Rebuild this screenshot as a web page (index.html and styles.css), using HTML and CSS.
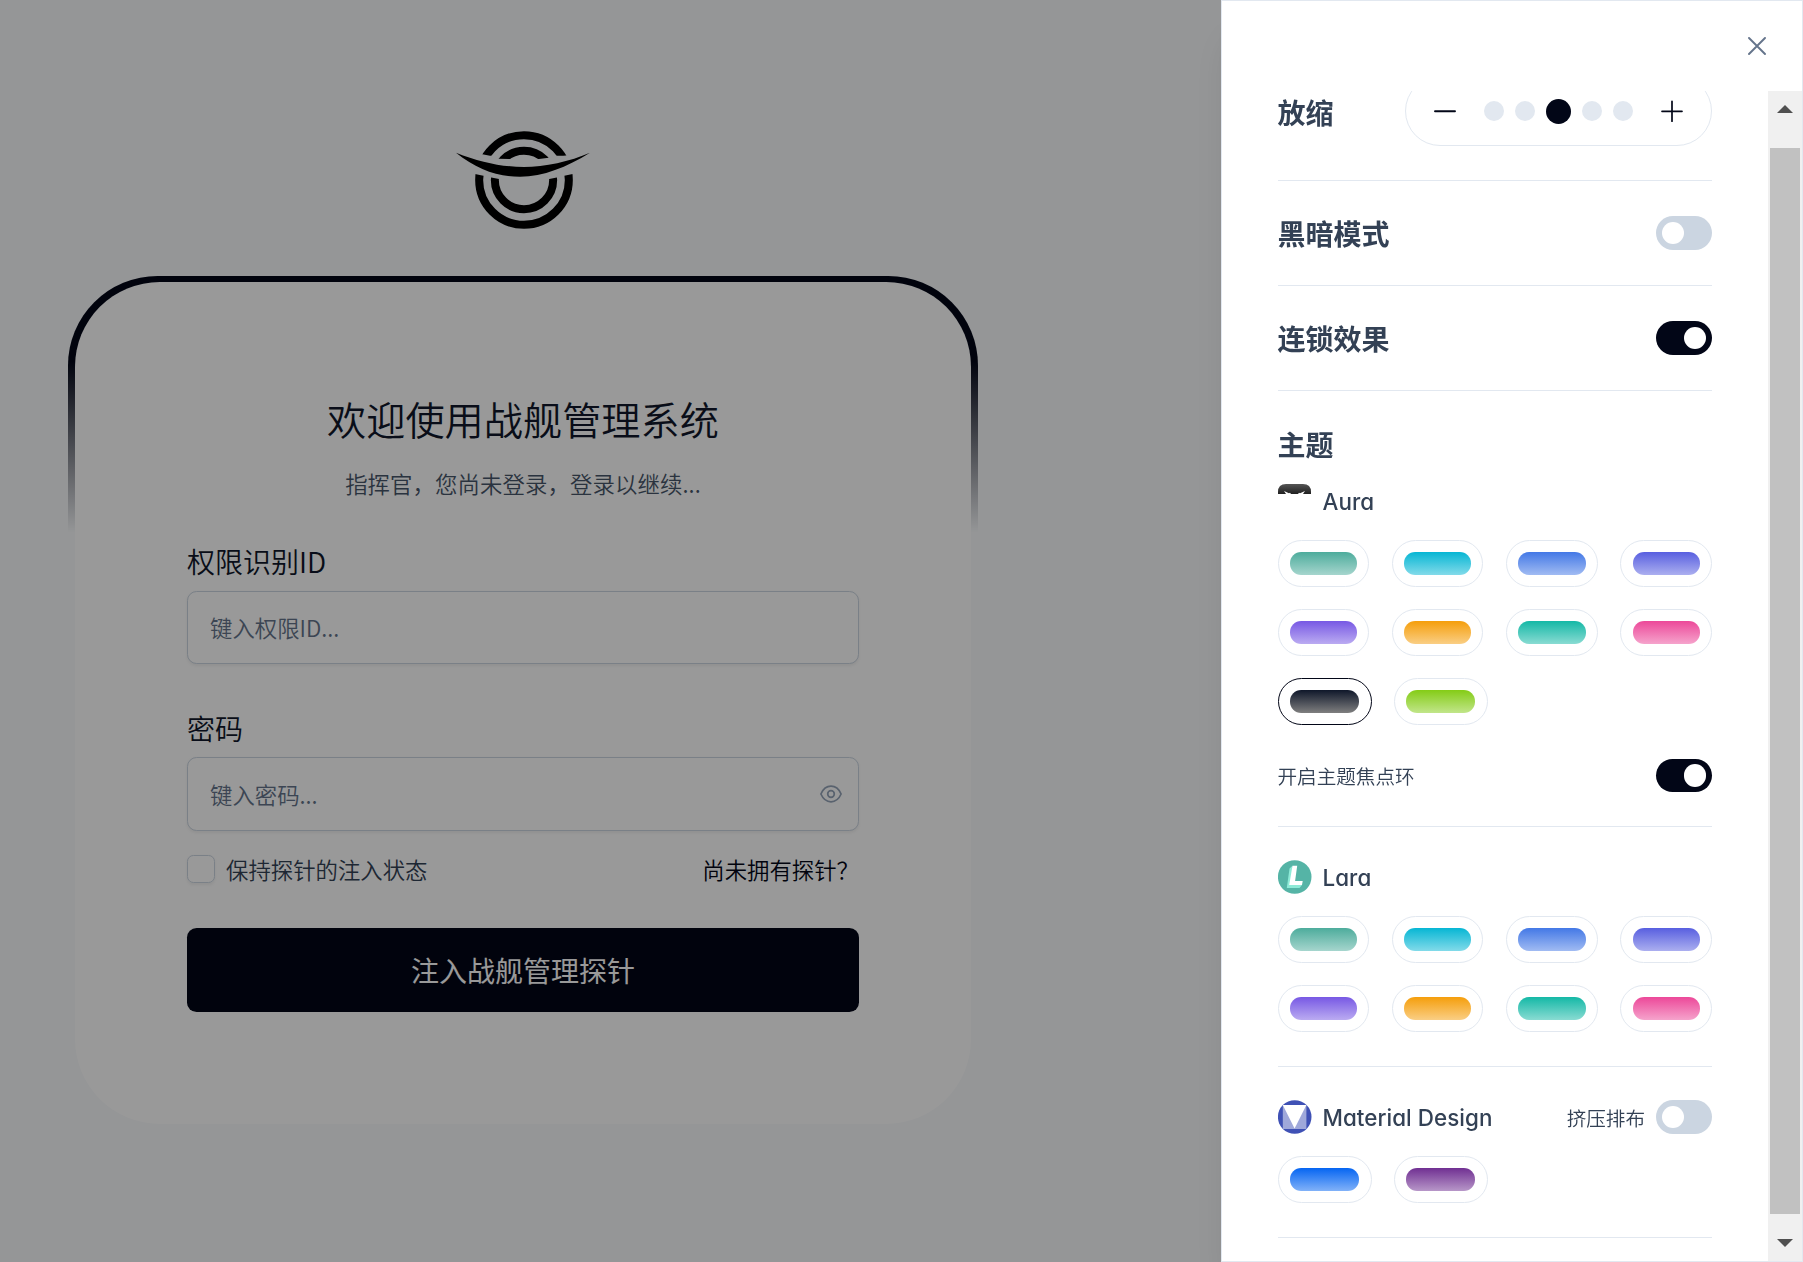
FILE: index.html
```html
<!DOCTYPE html>
<html lang="zh-CN">
<head>
<meta charset="utf-8">
<title>战舰管理系统</title>
<link rel="stylesheet" href="styles.css">
</head>
<body>
<main class="login">
  <svg class="brand" viewBox="45 55 410 310" aria-hidden="true">
    <defs>
      <clipPath id="outer-clip"><path d="M90 50H414V134L370 138L354 138L150 138L127 134H90ZM90 190L105 193L130 198H373L398 193L414 190V370H90Z"/></clipPath>
      <clipPath id="inner-clip"><path d="M150 100H354V144L326 144L297 148H207L178 147H150ZM150 203L177 208H328L354 203V330H150Z"/></clipPath>
    </defs>
    <g fill="none" stroke="#000" stroke-width="24">
      <circle cx="252" cy="211" r="134.5" clip-path="url(#outer-clip)"/>
      <circle cx="252" cy="211" r="87.5" clip-path="url(#inner-clip)"/>
    </g>
    <path d="M48 129C120 158 190 172 252 172S390 155 450 129C380 172 310 201 240 201S110 178 48 129Z"/>
  </svg>
  <div class="card-frame">
    <form class="card">
      <h1 class="title">欢迎使用战舰管理系统</h1>
      <p class="subtitle">指挥官，您尚未登录，登录以继续...</p>
      <label class="label" for="uid">权限识别ID</label>
      <input class="input" id="uid" type="text" placeholder="键入权限ID...">
      <label class="label label-password" for="pwd">密码</label>
      <div class="password">
        <input class="input" id="pwd" type="password" placeholder="键入密码...">
        <svg class="eye" viewBox="0 0 22 18" fill="none" stroke="#94a3b8" stroke-width="1.7"><path d="M.9 9C3 4.2 6.6 1.2 11 1.2S19 4.2 21.1 9C19 13.8 15.4 16.8 11 16.8S3 13.8.9 9Z"/><circle cx="11" cy="9" r="3.3"/></svg>
      </div>
      <div class="options">
        <span class="remember"><span class="checkbox"></span>保持探针的注入状态</span>
        <a class="signup">尚未拥有探针？</a>
      </div>
      <button class="submit" type="button">注入战舰管理探针</button>
    </form>
  </div>
</main>
<div class="mask"></div>
<aside class="panel">
  <header class="panel-header">
    <svg class="close" viewBox="0 0 18 18" fill="none" stroke="#64748b" stroke-width="1.9" stroke-linecap="round"><path d="M1 1L17 17M17 1L1 17"/></svg>
  </header>
  <div class="panel-body">
    <div class="panel-scroll">
      <div class="content">
        <section class="row scale-row">
          <h2 class="heading">放缩</h2>
          <div class="scale">
            <svg class="step" viewBox="0 0 22 22" stroke="#020617" stroke-width="1.9" stroke-linecap="round"><path d="M1 11.3H21"/></svg>
            <div class="dots"><i class="dot"></i><i class="dot"></i><i class="dot current"></i><i class="dot"></i><i class="dot"></i></div>
            <svg class="step" viewBox="0 0 22 22" stroke="#020617" stroke-width="1.7" stroke-linecap="round"><path d="M1 11.3H21M11 1.3V21.3"/></svg>
          </div>
        </section>
        <section class="row"><h2 class="heading">黑暗模式</h2><span class="toggle"></span></section>
        <section class="row"><h2 class="heading">连锁效果</h2><span class="toggle on"></span></section>
        <section class="group theme">
          <h2 class="heading theme-heading">主题</h2>
          <div class="group-header">
            <svg class="logo" viewBox="0 0 34 34"><defs><linearGradient id="aura" x1="0" y1="0" x2="0" y2="1"><stop offset="0" stop-color="#555"/><stop offset="1" stop-color="#202020"/></linearGradient></defs><path fill="url(#aura)" d="M0 10V8Q0 0 8 0H25Q33 0 33 8V10Z"/><path fill="#fff" d="M6 7L11 9.2L12 8.8L13 10H8ZM27 7L22 9.2L21 8.8L20 10H25Z"/></svg>
            <span class="name">Aura</span>
          </div>
          <div class="swatches">
            <span class="swatch"><i class="green"></i></span><span class="swatch"><i class="cyan"></i></span><span class="swatch"><i class="blue"></i></span><span class="swatch"><i class="indigo"></i></span>
            <span class="swatch"><i class="purple"></i></span><span class="swatch"><i class="amber"></i></span><span class="swatch"><i class="teal"></i></span><span class="swatch"><i class="pink"></i></span>
          </div>
          <div class="swatches pair next">
            <span class="swatch selected"><i class="noir"></i></span><span class="swatch"><i class="lime"></i></span>
          </div>
          <div class="option"><span class="small">开启主题焦点环</span><span class="toggle on"></span></div>
        </section>
        <section class="group">
          <div class="group-header">
            <svg class="logo" viewBox="0 0 34 34"><circle cx="16.7" cy="17" r="16.8" fill="#55b4a6"/><path fill="#8eead7" d="M14.5 5.7L11.5 8.5L8.8 28H21.5L24 25L15 20Z"/><path fill="#fff" d="M14.5 5.7H19.2L17.1 21H24.7L24 25H11.2Z"/></svg>
            <span class="name">Lara</span>
          </div>
          <div class="swatches">
            <span class="swatch"><i class="green"></i></span><span class="swatch"><i class="cyan"></i></span><span class="swatch"><i class="blue"></i></span><span class="swatch"><i class="indigo"></i></span>
            <span class="swatch"><i class="purple"></i></span><span class="swatch"><i class="amber"></i></span><span class="swatch"><i class="teal"></i></span><span class="swatch"><i class="pink"></i></span>
          </div>
        </section>
        <section class="group">
          <div class="group-header">
            <svg class="logo" viewBox="0 0 34 34"><circle cx="16.7" cy="17" r="16.8" fill="#3f51b5"/><path fill="#9fa8da" d="M4.8 5H28.4V29H4.8Z"/><path fill="#fff" d="M4.8 5H28.4L16.6 28.6Z"/></svg>
            <span class="name">Material Design</span>
            <span class="small push">挤压排布</span><span class="toggle"></span>
          </div>
          <div class="swatches pair">
            <span class="swatch"><i class="md-blue"></i></span><span class="swatch"><i class="md-purple"></i></span>
          </div>
        </section>
      </div>
    </div>
    <div class="scrollbar">
      <svg class="arrow" viewBox="0 0 16 8"><path fill="#505050" d="M8 0L16 8H0Z"/></svg>
      <div class="thumb"></div>
      <svg class="arrow" viewBox="0 0 16 8"><path fill="#505050" d="M0 0H16L8 8Z"/></svg>
    </div>
  </div>
</aside>
</body>
</html>
```
FILE: styles.css
```css
* { box-sizing: border-box; }

body {
  margin: 0;
  height: 1262px;
  overflow: hidden;
  background: #f8fafc;
  color: #334155;
  font-family: "Inter", "Noto Sans CJK SC", sans-serif;
  font-feature-settings: "cv02", "cv03", "cv04", "cv11";
  font-size: 22.4px;
}

h1, h2, p { margin: 0; }

/* Login page */
.login {
  display: flex;
  flex-direction: column;
  align-items: center;
  width: 1046px;
  padding-top: 128.3px;
  font-family: "Noto Sans CJK SC", sans-serif;
  font-weight: 350;
}

.brand {
  width: 136.67px;
  height: 103.33px;
  margin-bottom: 44.4px;
}

.card-frame {
  width: 910px;
  height: 854px;
  padding: 6px 7px;
  border-radius: 89.6px;
  background: linear-gradient(180deg, #020617 10%, rgba(33, 150, 243, 0) 30%);
}

.card {
  display: flex;
  flex-direction: column;
  height: 100%;
  padding: 110px 112px 0;
  border-radius: 84.8px;
  background: #fff;
}

.title {
  margin-top: -2px;
  line-height: 56px;
  font-size: 39.2px;
  font-weight: 350;
  color: #0f172a;
  text-align: center;
}

.subtitle {
  margin-top: 20px;
  line-height: 34px;
  letter-spacing: .1px;
  color: #475569;
  text-align: center;
}

.label {
  margin-top: 40px;
  line-height: 42px;
  font-size: 28px;
  font-weight: 350;
  color: #0f172a;
}

.label-password { margin-top: 43px; }

.input {
  width: 100%;
  height: 73.4px;
  margin-top: 9px;
  padding: 0 22px 2px;
  border: 1px solid #cbd5e1;
  border-radius: 9.6px;
  background: #fff;
  box-shadow: 0 1.6px 3px rgba(18, 18, 23, .06);
  font: inherit;
}

.input::placeholder { color: #64748b; opacity: 1; }

.password { position: relative; height: 81.4px; }
.password .input { margin-top: 8px; padding-bottom: 0; }

.eye {
  position: absolute;
  right: 17px;
  top: 36px;
  width: 22px;
  height: 18px;
}

.options {
  display: flex;
  justify-content: space-between;
  align-items: center;
  height: 34px;
  margin-top: 21px;
  color: #334155;
}

.remember { display: flex; align-items: center; gap: 11px; }

.checkbox {
  width: 28px;
  height: 28px;
  border: 1px solid #cbd5e1;
  border-radius: 6.4px;
  box-shadow: 0 1.6px 3px rgba(18, 18, 23, .06);
}

.signup { color: #020617; }

.submit {
  height: 84px;
  margin-top: 42px;
  padding-top: 2px;
  border: 0;
  border-radius: 9.6px;
  background: #020617;
  color: #fff;
  font: inherit;
  font-size: 28px;
  font-weight: 400;
}

.mask {
  position: fixed;
  inset: 0;
  background: rgba(0, 0, 0, .4);
}

/* Settings drawer */
.panel {
  position: fixed;
  top: 0;
  right: 0;
  display: flex;
  flex-direction: column;
  width: 582px;
  height: 1262px;
  border: 1px solid #e2e8f0;
  background: #fff;
  box-shadow: 0 32px 40px -8px rgba(0, 0, 0, .1), 0 13px 16px -10px rgba(0, 0, 0, .1);
}

.panel-header {
  display: flex;
  flex: none;
  justify-content: flex-end;
  align-items: center;
  height: 90px;
  padding-right: 36px;
}

.close { width: 18px; height: 18px; }

.panel-body { display: flex; flex: 1; min-height: 0; }

.panel-scroll { flex: 1; padding: 0 56px 0 55.5px; overflow: hidden; }

/* Content is scrolled slightly past its start */
.content { margin-top: -15px; }

.row {
  display: flex;
  justify-content: space-between;
  align-items: center;
  height: 105px;
  border-bottom: 1px solid #e2e8f0;
}

.scale-row { align-items: flex-start; }
.scale-row .heading { padding-top: 16px; }

.heading {
  line-height: 40px;
  font-family: "Noto Sans CJK SC", sans-serif;
  font-size: 28px;
  font-weight: 700;
}

.scale {
  display: flex;
  justify-content: space-between;
  align-items: center;
  width: 307px;
  height: 70px;
  padding: 0 28px;
  border: 1px solid #e2e8f0;
  border-radius: 35px;
}

.step { width: 22px; height: 22px; }

.dots { display: flex; align-items: center; gap: 10.6px; }

.dot {
  width: 20.4px;
  height: 20.4px;
  border-radius: 50%;
  background: #e2e8f0;
}

.dot.current { width: 25px; height: 25px; background: #020617; }

.toggle {
  display: flex;
  flex: none;
  align-items: center;
  width: 56px;
  height: 33.6px;
  padding: 0 5.6px;
  border-radius: 17px;
  background: #cbd5e1;
}

.toggle::after {
  content: "";
  width: 22.4px;
  height: 22.4px;
  border-radius: 50%;
  background: #fff;
}

.toggle.on { justify-content: flex-end; background: #020617; }

.group {
  padding: 33px 0 34px;
  border-bottom: 1px solid #e2e8f0;
}

.theme .group-header { margin-top: 20px; }

.group-header {
  display: flex;
  align-items: center;
  height: 34px;
  margin-bottom: 22px;
}

.logo { width: 34px; height: 34px; margin-right: 11px; }

.name { font-weight: 450; letter-spacing: .05px; }

.small {
  font-family: "Noto Sans CJK SC", sans-serif;
  font-size: 19.6px;
  font-weight: 350;
}

.option .small { padding-bottom: 1px; }

.push { margin: 0 11px 0 auto; }

.swatches {
  display: grid;
  grid-template-columns: repeat(4, 1fr);
  gap: 22px 22.6px;
}

.swatches.pair { grid-template-columns: 94px 94px; column-gap: 22px; }
.swatches.next { margin-top: 22px; }

.swatch {
  height: 47px;
  padding: 11.3px 11.2px;
  border: 1px solid #e2e8f0;
  border-radius: 23.5px;
}

.swatch.selected { border-color: #020617; }

.swatch i {
  display: block;
  height: 22.4px;
  border-radius: 11.2px;
}

.green { background: linear-gradient(180deg, #4dac9c, rgba(77, 172, 156, .5)); }
.cyan { background: linear-gradient(180deg, #06b6d4, rgba(6, 182, 212, .5)); }
.blue { background: linear-gradient(180deg, #4378e6, rgba(67, 120, 230, .5)); }
.indigo { background: linear-gradient(180deg, #585fe0, rgba(88, 95, 224, .5)); }
.purple { background: linear-gradient(180deg, #7758e4, rgba(119, 88, 228, .5)); }
.amber { background: linear-gradient(180deg, #f59e0b, rgba(245, 158, 11, .5)); }
.teal { background: linear-gradient(180deg, #14b8a6, rgba(20, 184, 166, .5)); }
.pink { background: linear-gradient(180deg, #ec4899, rgba(236, 72, 153, .5)); }
.noir { background: linear-gradient(180deg, #0f172a, rgba(0, 0, 0, .5)); }
.lime { background: linear-gradient(180deg, #84cc16, rgba(132, 204, 22, .5)); }
.md-blue { background: linear-gradient(180deg, #0565f2, rgba(5, 101, 242, .5)); }
.md-purple { background: linear-gradient(180deg, #702f92, rgba(112, 47, 146, .5)); }

.option {
  display: flex;
  justify-content: space-between;
  align-items: center;
  height: 33px;
  margin-top: 34px;
}

.scrollbar {
  display: flex;
  flex: none;
  flex-direction: column;
  align-items: center;
  width: 34px;
  padding: 14px 2px;
  background: #f0f0f0;
}

.arrow { flex: none; width: 16px; height: 8px; }

.thumb {
  width: 30px;
  height: 1066px;
  margin: 35px 0 25px;
  background: #c1c1c1;
}
```
